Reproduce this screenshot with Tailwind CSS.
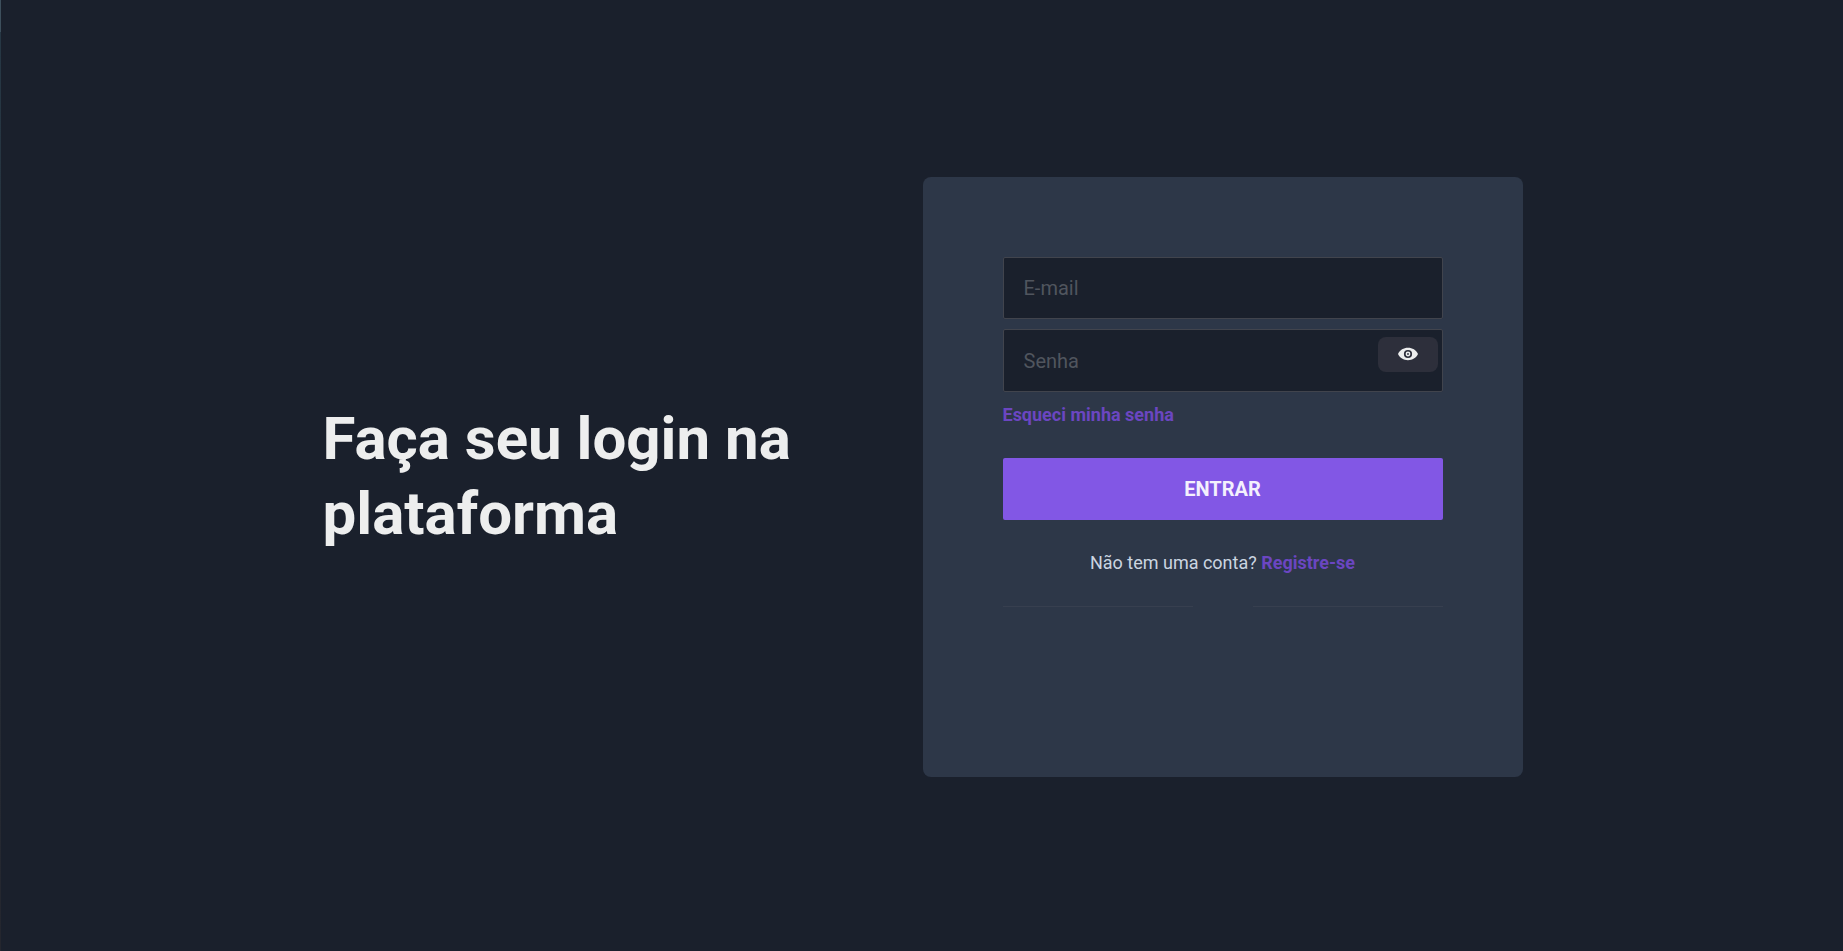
<!DOCTYPE html>
<html lang="pt-BR">
<head>
<meta charset="utf-8">
<title>Login</title>
<script src="https://cdn.jsdelivr.net/npm/@tailwindcss/browser@4"></script>
</head>
<body class="min-h-screen flex bg-[#1a202c] font-[Roboto,sans-serif]">
  <div class="w-px flex flex-col bg-linear-to-b from-[#263845] to-[#24262e]">
    <div class="h-8 bg-[#3d4f5c]"></div>
  </div>
  <div class="flex-1 flex items-center justify-center pl-px">
    <main class="w-full max-w-[1200px] flex items-center justify-between pt-[3px]">
      <h1 class="w-full max-w-[480px] pb-0.5 text-6xl leading-[75px] font-bold text-[#edeeee]">Faça seu login na plataforma</h1>
      <form class="w-full max-w-[600px] min-h-[600px] rounded-lg bg-[#2d3748] p-20 flex flex-col">
        <input type="email" aria-label="E-mail" placeholder="E-mail" class="w-full h-[62px] rounded-xs border border-[#41444d] bg-[#1a202c] px-5 text-xl leading-6 text-[#edeeee] placeholder:text-[#50555e]">
        <div class="relative mt-2.5">
          <input type="password" aria-label="Senha" placeholder="Senha" class="w-full h-[63px] block rounded-xs border border-[#41444d] bg-[#1a202c] px-5 text-xl leading-6 text-[#edeeee] placeholder:text-[#50555e]">
          <button type="button" aria-label="Mostrar senha" class="absolute top-2 right-[5px] w-[60px] h-[35px] pb-0.5 rounded-lg bg-[#2d2f3b] text-[#edeeee] flex items-center justify-center">
            <svg class="size-5" viewBox="0 0 20 20" fill="currentColor" fill-rule="evenodd"><path d="M0 10C2 6 5.500 3.800 10 3.800S18 6 20 10C18 14 14.500 16.200 10 16.200S2 14 0 10ZM10 5.900a4.100 4.100 0 1 0 0 8.200 4.100 4.100 0 0 0 0-8.200ZM10 7.600a2.400 2.400 0 1 1 0 4.800 2.400 2.400 0 0 1 0-4.800ZM10 9.100a.9.9 0 1 0 0 1.800.9.9 0 0 0 0-1.800Z"/></svg>
          </button>
        </div>
        <a href="#" class="self-start mt-[11px] text-lg leading-6 font-bold text-[#6b46c1]">Esqueci minha senha</a>
        <button type="submit" class="w-full h-[62px] mt-[31px] rounded-xs bg-[#8257e5] text-xl font-bold text-[#f4f0fd]">ENTRAR</button>
        <p class="mt-[31px] text-center text-lg leading-6 text-[#cbd5e0]">Não tem uma conta? <a href="#" class="font-bold text-[#6b46c1]">Registre-se</a></p>
        <div class="flex justify-between gap-15 mt-[31px]">
          <div class="flex-1 h-px bg-[#373f4f]"></div>
          <div class="flex-1 h-px bg-[#373f4f]"></div>
        </div>
      </form>
    </main>
  </div>
</body>
</html>
